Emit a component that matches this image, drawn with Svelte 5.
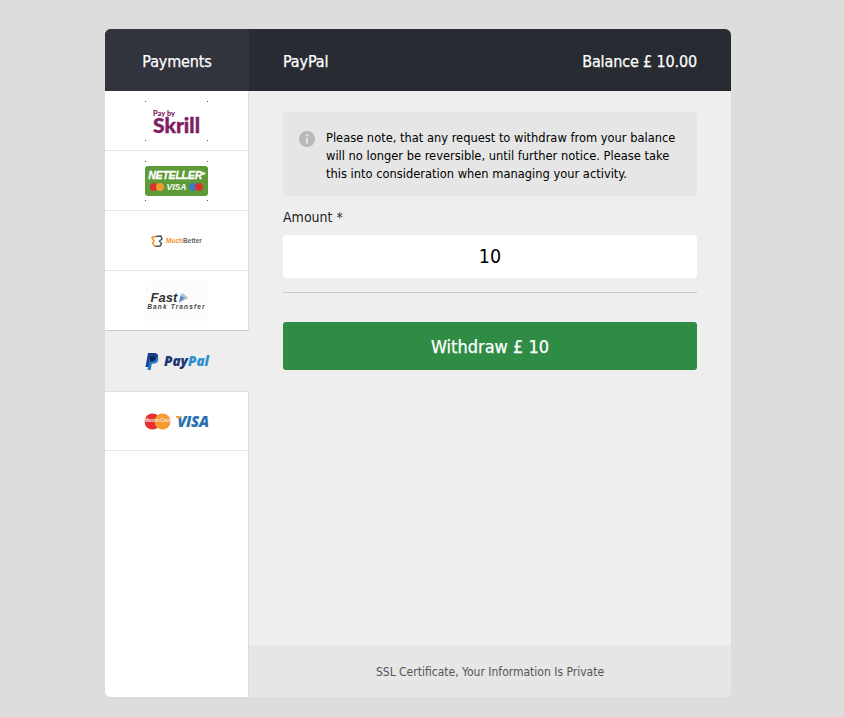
<script lang="ts">
  const methods = [
    { id: 'skrill' },
    { id: 'neteller' },
    { id: 'muchbetter' },
    { id: 'fast' },
    { id: 'paypal' },
    { id: 'cards' }
  ];
  let active = 'paypal';
  let amount = '10';
</script>

<div class="page">
  <div class="card">
    <header>
      <div class="head-side">Payments</div>
      <div class="head-main">
        <span>PayPal</span>
        <span>Balance £ 10.00</span>
      </div>
    </header>

    <div class="body">
      <ul class="methods">
        {#each methods as m}
          <li class:active={active === m.id}>
            {#if m.id === 'skrill'}
              <div class="logo">
                <i class="d tl"></i><i class="d tr"></i><i class="d bl"></i><i class="d br"></i>
                <div class="skrill"><small>Pay by</small><b>Skrill</b></div>
              </div>
            {:else if m.id === 'neteller'}
              <div class="logo">
                <i class="d tl"></i><i class="d tr"></i><i class="d bl"></i><i class="d br"></i>
                <div class="neteller">
                  <b>NETELLER<sup>®</sup></b>
                  <div class="net-row">
                    <svg width="14" height="8" viewBox="0 0 14 8"><circle cx="4" cy="4" r="4" fill="#d9322e"/><circle cx="10" cy="4" r="4" fill="#f29a2e"/></svg>
                    <em>VISA</em>
                    <svg width="14" height="8" viewBox="0 0 14 8"><circle cx="4" cy="4" r="4" fill="#3b7cc4"/><circle cx="10" cy="4" r="4" fill="#d9322e"/></svg>
                  </div>
                </div>
              </div>
            {:else if m.id === 'muchbetter'}
              <div class="muchbetter">
                <svg width="12" height="12" viewBox="0 0 12 12" fill="none">
                  <path d="M4.500 1.500 10 1l1 3-2.500 2 2 2.500L9 11l-5 .5" stroke="#555" stroke-width="1.500"/>
                  <path d="M4.500 1.500 1 2.500 3 6 1.500 8 4 11.500" stroke="#f7931e" stroke-width="1.500"/>
                </svg>
                <span class="mb-o">Much</span><span class="mb-g">Better</span>
              </div>
            {:else if m.id === 'fast'}
              <div class="fast">
                <div class="fast-top">
                  <b>Fast</b>
                  <svg width="11" height="11" viewBox="0 0 11 11">
                    <path d="M1 10.500 4 .5 10.500 6Z" fill="#b7c0c8"/>
                    <path d="M1 10.500 2.500 3 6.500 6.500Z" fill="#5b8fc2"/>
                  </svg>
                </div>
                <span>Bank Transfer</span>
              </div>
            {:else if m.id === 'paypal'}
              <div class="paypal">
                <svg width="14" height="17" viewBox="0 0 14 17">
                  <path d="M3 0h6c3 0 4.500 1.600 4 4.200-.6 3-2.600 4.300-5.400 4.300H5.500L4.500 14H.5Z" fill="#1b3f8f"/>
                  <path d="M4.500 3.500h5.500c2.500 0 3.700 1.400 3.200 3.500-.5 2.600-2.300 3.800-4.800 3.800H6.700L5.800 17H2.500Z" fill="#1a6fc0" opacity=".9"/>
                  <path d="M4.500 3.500h6c.6 2.600-1 5-4 5H5.500Z" fill="#0b2050"/>
                </svg>
                <span class="pp-a">Pay</span><span class="pp-b">Pal</span>
              </div>
            {:else}
              <div class="cards">
                <div class="mc"><svg width="27" height="17" viewBox="0 0 27 17"><circle cx="8.500" cy="8.500" r="8" fill="#e3312f"/><circle cx="18.500" cy="8.500" r="8" fill="#f79a32"/></svg><span>MasterCard</span></div>
                <span class="visa">VISA</span>
              </div>
            {/if}
          </li>
        {/each}
      </ul>

      <div class="main">
        <div class="content">
          <div class="notice">
            <svg class="info" width="16" height="16" viewBox="0 0 16 16">
              <circle cx="8" cy="8" r="8" fill="#b9b9b9"/>
              <circle cx="8.300" cy="4.300" r="1.200" fill="#e6e6e6"/>
              <path d="M7 7h2l-.4 6H6.800Z" fill="#e6e6e6"/>
            </svg>
            <p>Please note, that any request to withdraw from your balance will no longer be reversible, until further notice. Please take this into consideration when managing your activity.</p>
          </div>
          <label for="amount">Amount *</label>
          <input id="amount" type="text" bind:value={amount} />
          <div class="rule"></div>
          <button type="button">Withdraw £ {amount}</button>
        </div>
        <footer>SSL Certificate, Your Information Is Private</footer>
      </div>
    </div>
  </div>
</div>

<style>
  :global(body) {
    margin: 0;
    background: #ddd;
  }

  .page {
    height: 717px;
    box-sizing: border-box;
    padding: 29px 113px 20px 105px;
    font-family: "DejaVu Sans Condensed", "DejaVu Sans", sans-serif;
  }

  .card {
    height: 100%;
    display: flex;
    flex-direction: column;
    border-radius: 6px;
    overflow: hidden;
  }

  header {
    height: 62px;
    flex: none;
    display: flex;
    color: #fff;
    font-size: 16px;
    letter-spacing: -0.14px;
    -webkit-text-stroke: 0.25px #fff;
    background: #292b33;
  }

  .head-side {
    width: 144px;
    padding-top: 2px;
    box-sizing: border-box;
    display: flex;
    align-items: center;
    justify-content: center;
    background: #31343d;
  }

  .head-main {
    flex: 1;
    display: flex;
    align-items: center;
    justify-content: space-between;
    padding: 2px 34px 0;
  }

  .body {
    flex: 1;
    display: flex;
    min-height: 0;
  }

  .methods {
    width: 143px;
    flex: none;
    margin: 0;
    padding: 0;
    list-style: none;
    background: #fff;
    border-right: 1px solid #ddd;
  }

  .methods li {
    height: 59px;
    border-bottom: 1px solid #e6e6e6;
    display: flex;
    align-items: center;
    justify-content: center;
  }

  .methods li:nth-child(4) {
    border-bottom-color: #ccc;
  }

  .methods li:last-child {
    height: 58px;
  }

  .methods li.active {
    height: 60px;
    background: #eee;
    margin-right: -1px;
    position: relative;
    border-bottom-color: #ddd;
  }

  .logo {
    position: relative;
    width: 63px;
    height: 40px;
    display: flex;
    align-items: center;
    justify-content: center;
  }

  .d {
    position: absolute;
    width: 1px;
    height: 1px;
    background: #555;
  }
  .tl { left: 0; top: 0; }
  .tr { right: 0; top: 0; }
  .bl { left: 0; bottom: 0; }
  .br { right: 0; bottom: 0; }

  .skrill {
    display: flex;
    flex-direction: column;
    color: #7d2163;
    line-height: 1;
    font-family: "Lato", sans-serif;
    margin-top: 2px;
  }
  .skrill small {
    font-size: 7.500px;
    font-weight: 900;
    height: 7px;
    line-height: 7px;
  }
  .skrill b {
    font-size: 21px;
    font-weight: 900;
    -webkit-text-stroke: 0.4px #7d2163;
    line-height: 16px;
  }

  .neteller {
    width: 63px;
    height: 30px;
    border-radius: 3px;
    background: #5e9a38;
    color: #fff;
    display: flex;
    flex-direction: column;
    align-items: center;
    justify-content: center;
    font-family: "Liberation Sans", sans-serif;
  }
  .neteller b {
    font-size: 10.500px;
    font-style: italic;
    line-height: 13px;
    letter-spacing: -0.2px;
    white-space: nowrap;
    -webkit-text-stroke: 0.3px #fff;
  }
  .neteller sup {
    font-size: 4px;
    line-height: 0;
  }
  .net-row {
    display: flex;
    align-items: center;
    gap: 3px;
    height: 10px;
  }
  .net-row em {
    font-size: 8.500px;
    font-weight: 700;
  }

  .muchbetter {
    display: flex;
    align-items: center;
    font-family: "Liberation Sans", sans-serif;
    font-size: 6.500px;
    font-weight: 700;
  }
  .muchbetter svg {
    margin-right: 3px;
  }
  .mb-o { color: #f7931e; }
  .mb-g { color: #666; }

  .fast {
    width: 63px;
    height: 40px;
    background: #fcfcfc;
    display: flex;
    flex-direction: column;
    align-items: center;
    justify-content: center;
    font-family: "Liberation Sans", sans-serif;
    color: #444;
  }
  .fast-top {
    display: flex;
    align-items: center;
    gap: 1px;
    width: 58px;
    height: 14px;
    margin-bottom: -2.500px;
    padding-left: 3px;
    box-sizing: border-box;
  }
  .fast b {
    font-size: 13px;
    font-style: italic;
    color: #333;
  }
  .fast span {
    font-size: 6.500px;
    font-style: italic;
    font-weight: 700;
    letter-spacing: 1.150px;
    white-space: nowrap;
    line-height: 9px;
  }

  .paypal {
    display: flex;
    align-items: center;
    font-family: "Open Sans", sans-serif;
    font-style: italic;
    font-weight: 800;
    font-size: 13.500px;
  }
  .paypal svg {
    margin-right: 5px;
  }
  .pp-a { color: #1b3674; }
  .pp-b { color: #2a8fd0; }

  .cards {
    display: flex;
    align-items: center;
    gap: 6px;
  }
  .mc {
    position: relative;
    display: flex;
  }
  .mc span {
    position: absolute;
    left: 0;
    top: 4px;
    width: 27px;
    text-align: center;
    font-family: "Liberation Sans", sans-serif;
    font-size: 5px;
    font-weight: 700;
    color: #f3e6e0;
    white-space: nowrap;
  }
  .visa {
    position: relative;
    font-family: "Open Sans", sans-serif;
    font-style: italic;
    font-weight: 800;
    font-size: 15px;
    color: #2a6fb0;
    letter-spacing: -0.3px;
  }
  .visa::before {
    content: '';
    position: absolute;
    left: -1px;
    top: 5px;
    width: 5px;
    height: 2px;
    background: #f2a33a;
  }

  .main {
    flex: 1;
    display: flex;
    flex-direction: column;
    background: #eee;
  }

  .content {
    flex: 1;
    padding: 21px 34px 0;
  }

  .notice {
    height: 84px;
    box-sizing: border-box;
    display: flex;
    gap: 11px;
    padding: 17px 16px 0;
    background: #e6e6e6;
    border-radius: 4px;
  }

  .info {
    flex: none;
    margin-top: 2px;
  }

  .notice p {
    margin: 0;
    font-size: 12.750px;
    line-height: 18px;
    color: #000;
  }

  label {
    display: block;
    margin-top: 12px;
    height: 27px;
    line-height: 18px;
    font-size: 14px;
    color: #222;
  }

  input {
    display: block;
    box-sizing: border-box;
    width: 100%;
    height: 43px;
    border: 0;
    border-radius: 4px;
    background: #fff;
    text-align: center;
    font-family: inherit;
    font-size: 19.500px;
    color: #000;
  }

  .rule {
    height: 1px;
    margin: 14px 0 29px;
    background: #c8c8c8;
  }

  button {
    display: block;
    width: 100%;
    height: 48px;
    border: 0;
    border-radius: 3px;
    background: #2f8c45;
    color: #fff;
    font-family: inherit;
    font-size: 18px;
    -webkit-text-stroke: 0.25px #fff;
  }

  footer {
    height: 52px;
    flex: none;
    box-sizing: border-box;
    padding-top: 2px;
    display: flex;
    align-items: center;
    justify-content: center;
    background: #e6e6e6;
    color: #555;
    font-size: 12px;
  }
</style>
